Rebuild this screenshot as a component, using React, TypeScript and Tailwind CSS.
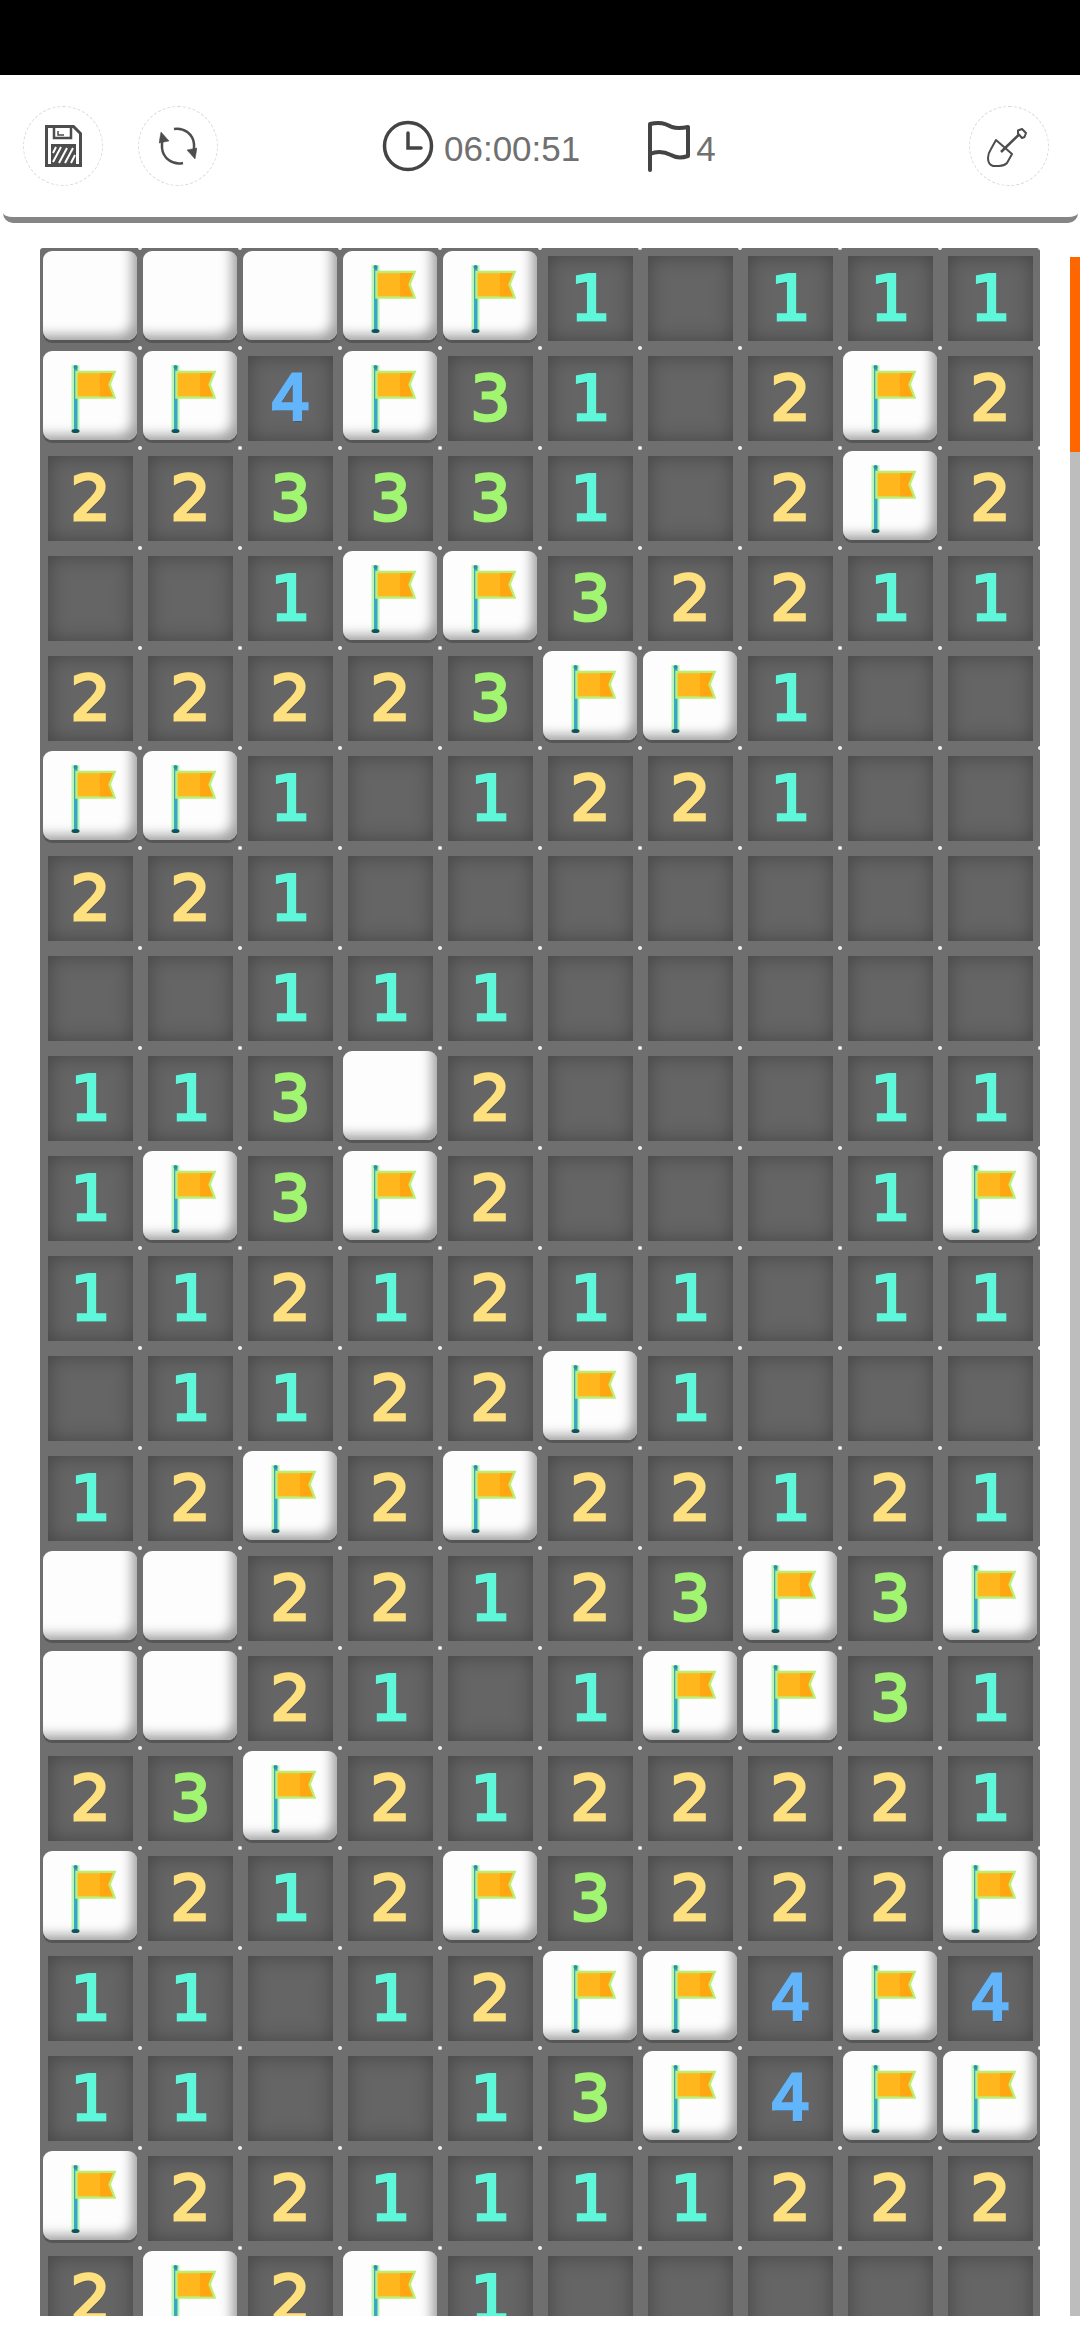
import React from 'react';

// board state: W = open white tile, F = flagged tile, . = empty sunken cell
const rows = [
  'WWWFF1.111',
  'FF4F31.2F2',
  '223331.2F2',
  '..1FF32211',
  '22223FF1..',
  'FF1.1221..',
  '221.......',
  '..111.....',
  '113W2...11',
  '1F3F2...1F',
  '1121211.11',
  '.1122F1...',
  '12F2F22121',
  'WW22123F3F',
  'WW21.1FF31',
  '23F2122221',
  'F212F3222F',
  '11.12FF4F4',
  '11..13F4FF',
  'F221111222',
  '2F2F1.....',
];

const digitColors: Record<string, string> = {
  '1': 'text-[#5ff7da]',
  '2': 'text-[#ffe07f]',
  '3': 'text-[#a2f570]',
  '4': 'text-[#63b5fb]',
};

const FlagMark = () => (
  <svg viewBox="0 0 94 89" className="w-[94px] h-[89px]">
    <path d="M28.500 14h8v68h-8z" fill="#a4f5a0" opacity="0.75" />
    <path d="M31 15h3.500v65h-3.500z" fill="#3aa6c4" />
    <ellipse cx="32.500" cy="80" rx="4" ry="2" fill="#14505f" />
    <ellipse cx="32.500" cy="16" rx="2" ry="2" fill="#2f8ca6" />
    <path d="M33.500 21h38l-5 12.500 5 13h-38z" fill="#ffb71d" stroke="#bdee72" strokeWidth="2.500" />
    <path d="M57 22h13l-5 11.500 5 12h-13z" fill="#ffa611" />
  </svg>
);

const Tile = ({ flag }: { flag?: boolean }) => (
  <div className="mx-[3px] mt-[3px] w-[94px] h-[89px] rounded-[9px] bg-[#fdfdfd] overflow-hidden shadow-[inset_-10px_-10px_12px_-5px_#a0a0a0,0_3px_0_#565656]">
    {flag && <FlagMark />}
  </div>
);

const Cell = ({ value, top }: { value: string; top: boolean }) => {
  const isTile = value === 'W' || value === 'F';
  return (
    <div className="relative h-[100px] w-[100px]">
      {isTile ? (
        <Tile flag={value === 'F'} />
      ) : (
        <div className="mx-2 mt-2 h-[85px] w-[85px] bg-[#656565] shadow-[inset_0_0_20px_#444] flex items-center justify-center">
          <span
            className={`font-['DejaVu_Sans',sans-serif] font-normal text-[63px] leading-none [-webkit-text-stroke:3px_currentColor] [text-shadow:1px_2px_0_#00000055] ${digitColors[value] ?? ''}`}
          >
            {value === '.' ? '' : value}
          </span>
        </div>
      )}
      {top && <span className="absolute -top-[2px] -right-[2px] w-1 h-1 rounded-full bg-white/90" />}
      <span className="absolute -bottom-[2px] -right-[2px] w-1 h-1 rounded-full bg-white/90" />
    </div>
  );
};

const RoundButton = ({ children }: { children: React.ReactNode }) => (
  <div className="w-[80px] h-[80px] rounded-full border border-dashed border-[#d8d8d8] flex items-center justify-center">
    {children}
  </div>
);

const App = () => (
  <div className="w-[1080px] h-[2340px] bg-white overflow-hidden flex flex-col">
    <div className="h-[75px] bg-black" />

    <header className="h-[148px] ml-[3px] mr-[2px] pl-5 pr-[29px] flex items-center rounded-b-[10px] border-b-[6px] border-[#858585] font-['Liberation_Sans',sans-serif] text-[#707070]">
      <RoundButton>
        <svg viewBox="0 0 37 42" className="w-[37px] h-[42px]">
          <path d="M1.500 1.500h27l7 7v32h-34z" fill="none" stroke="#4d4d4d" strokeWidth="3" />
          <path d="M9 2v11h17V2" fill="none" stroke="#4d4d4d" strokeWidth="2.500" />
          <path d="M13 6v4h6" fill="none" stroke="#4d4d4d" strokeWidth="1.500" />
          <path d="M6 19h25v21H6z" fill="#4d4d4d" />
          <path d="M8 37l8-15M14 38l8-15M20 38l8-15M26 38l4-8M8 28l3-6" stroke="#fff" strokeWidth="2" />
        </svg>
      </RoundButton>
      <div className="ml-[35px]">
        <RoundButton>
          <svg viewBox="0 0 38 38" className="w-[38px] h-[38px]" fill="none" stroke="#4d4d4d" strokeWidth="2.500">
            <path d="M15 2a17 17 0 0 1 20 15v8" />
            <path d="M28 23l8 9 2-11z" fill="#4d4d4d" strokeWidth="0.500" />
            <path d="M24 36a17 17 0 0 1-21-15v-8" />
            <path d="M10 14l-8-9-2 11z" fill="#4d4d4d" strokeWidth="0.500" />
          </svg>
        </RoundButton>
      </div>

      <div className="ml-[164px] flex items-center">
        <svg viewBox="0 0 52 52" className="w-[52px] h-[52px]" fill="none" stroke="#444" strokeWidth="3.500">
          <circle cx="26" cy="26" r="23.500" />
          <path d="M26 13v15h13" strokeLinecap="round" />
        </svg>
        <span className="ml-[10px] text-[35px] leading-none mt-1">06:00:51</span>
      </div>

      <div className="ml-[67px] flex items-center">
        <svg viewBox="0 0 44 52" className="w-[44px] h-[52px]" fill="none" stroke="#444" strokeWidth="4" strokeLinecap="round">
          <path d="M3 50V4c12-3 17 1 22 3 6 2 11 1 16 0v29c-6 2-12 2-17-1-6-3-14-4-21-1" strokeLinejoin="round" />
        </svg>
        <span className="ml-[5px] text-[35px] leading-none mt-1">4</span>
      </div>

      <div className="ml-auto">
        <RoundButton>
          <svg viewBox="0 0 40 40" className="w-[40px] h-[40px] mt-1 -ml-1" fill="none" stroke="#4d4d4d" strokeWidth="2" strokeLinejoin="round">
            <path d="M14 24L32 6.500" strokeWidth="2.500" />
            <path d="M31 2.500l4-1.500 4 4-1.500 4-2.500 1-4-4.500z" />
            <path d="M9 12l16 14-5 9c-2 2-6 3-8 3H6c-3-1-5-4-5-8 0-3 1-6 3-9z" />
          </svg>
        </RoundButton>
      </div>
    </header>

    <main className="h-[2093px] overflow-hidden flex">
      <div className="mt-[25px] ml-[40px] w-[1000px] self-start bg-[#6f6f6f] rounded-[3px] grid grid-cols-[repeat(10,100px)]">
        {rows.map((row, r) =>
          row.split('').map((value, c) => <Cell key={`${r}-${c}`} value={value} top={r === 0} />)
        )}
      </div>
      <div className="ml-[30px] mt-[34px] w-[10px] flex-1 bg-[#bdbdbd]">
        <div className="h-[195px] bg-[#ff6600]" />
      </div>
    </main>
  </div>
);

export default App;
